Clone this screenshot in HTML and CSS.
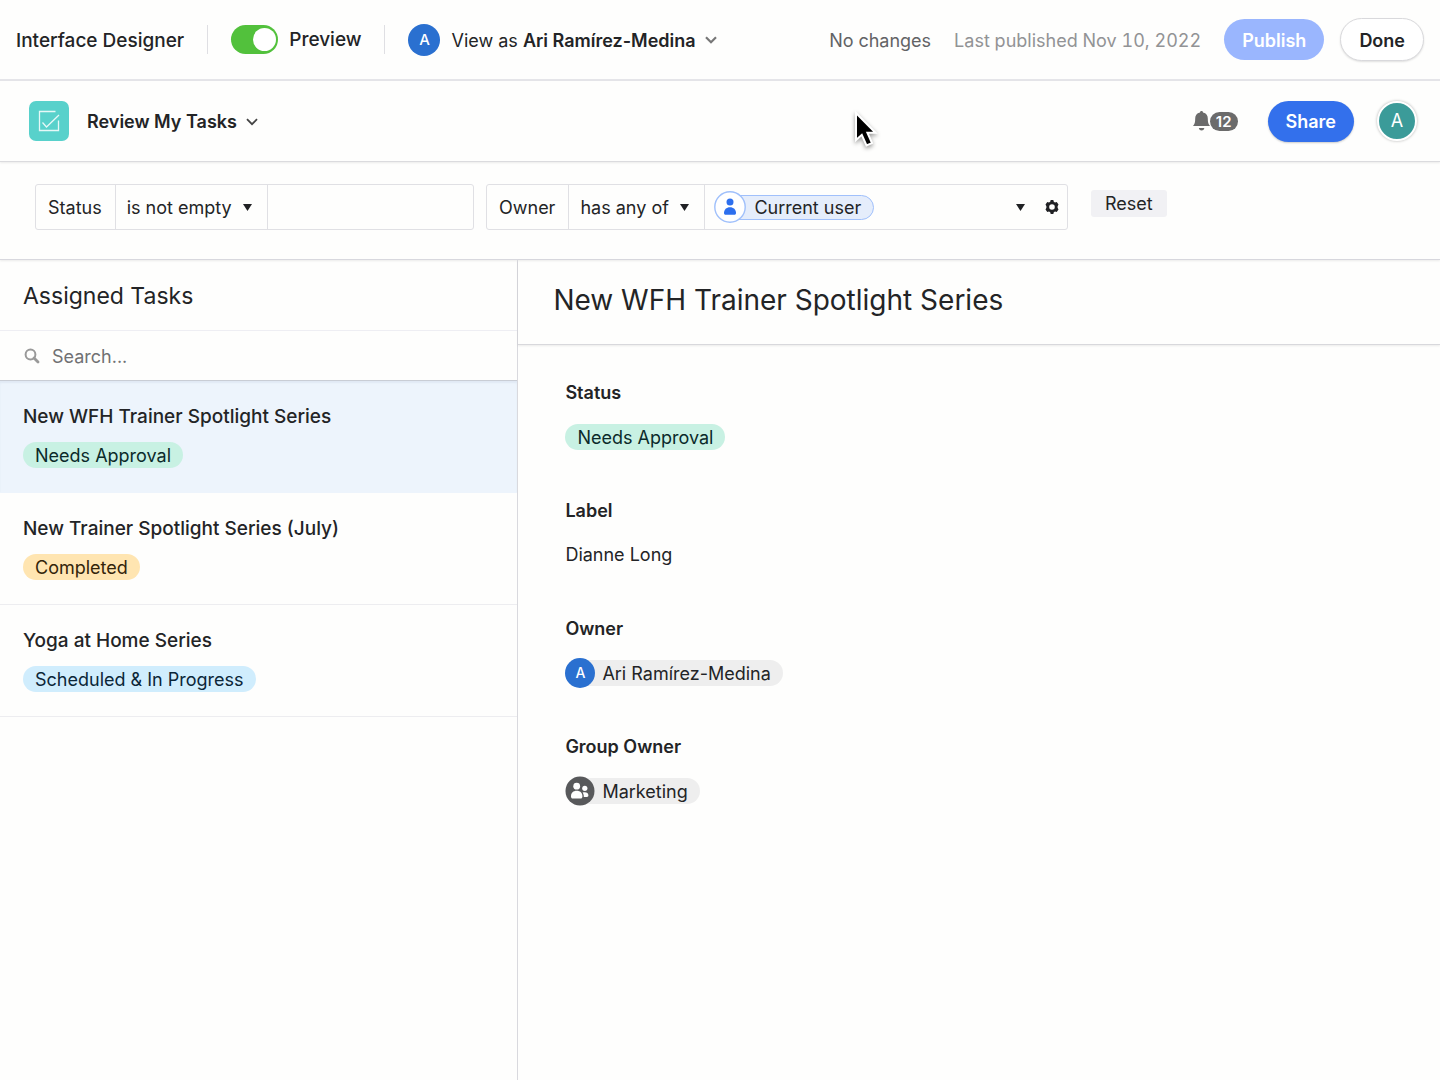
FILE: index.html
```html
<!DOCTYPE html>
<html lang="en">
<head>
<meta charset="utf-8">
<meta name="viewport" content="width=device-width, initial-scale=1">
<title>Review My Tasks</title>
<link rel="stylesheet" href="styles.css">
</head>
<body>
<div class="app">
  <header class="designer-bar">
    <span class="designer-title">Interface Designer</span>
    <span class="divider"></span>
    <label class="preview"><input class="toggle" type="checkbox" role="switch" checked>Preview</label>
    <span class="divider"></span>
    <button class="view-as" type="button" aria-haspopup="listbox">
      <span class="avatar avatar-md">A</span>
      <span class="view-as-text">View as <strong>Ari Ramírez-Medina</strong></span>
      <svg class="chevron" width="12" height="8" viewBox="0 0 12 8" aria-hidden="true"><path d="M1 1.2l5 5 5-5" fill="none" stroke="#777" stroke-width="2.2"/></svg>
    </button>
    <div class="designer-actions">
      <span class="changes">No changes</span>
      <span class="published">Last published Nov 10, 2022</span>
      <button class="pill-button publish" type="button">Publish</button>
      <button class="pill-button done" type="button">Done</button>
    </div>
  </header>

  <header class="interface-bar">
    <svg class="logo" width="40" height="40" viewBox="0 0 40 40" aria-hidden="true"><rect width="40" height="40" rx="7" fill="#58d1cb"/><path d="M26.5 10.500H10.500v19h19V19.500M13.500 21.500l4 4.500L30 14" fill="none" stroke="#fff" stroke-opacity=".85" stroke-width="1.300"/></svg>
    <button class="interface-name" type="button" aria-haspopup="menu">Review My Tasks
      <svg class="chevron" width="12" height="8" viewBox="0 0 12 8" aria-hidden="true"><path d="M1 1.200l5 5 5-5" fill="none" stroke="#444" stroke-width="1.800"/></svg>
    </button>
    <div class="interface-actions">
      <button class="notifications" type="button" aria-label="12 notifications">
        <svg width="17" height="20" viewBox="0 0 17 20" aria-hidden="true"><path d="M8.500 0c1 0 1.500.6 1.500 1.500 3.500.8 4.800 3 4.800 6 0 4 .5 5.500 2.200 7.500H0c1.700-2 2.200-3.500 2.200-7.500 0-3 1.300-5.200 4.800-6C7 .6 7.500 0 8.500 0zM5.800 17h5.600c-.4 1.700-1.400 2.500-2.800 2.500S6.200 18.700 5.800 17z" fill="#6b6b6b"/></svg>
        <span class="count">12</span>
      </button>
      <button class="pill-button share" type="button">Share</button>
      <button class="avatar account" type="button" aria-label="Account">A</button>
    </div>
  </header>

  <section class="filters" aria-label="Filters">
    <div class="filter filter-status">
      <label class="filter-field" for="status-op">Status</label>
      <div class="filter-op">
        <select id="status-op"><option>is not empty</option></select>
        <svg class="caret" width="9" height="7" viewBox="0 0 9 7" aria-hidden="true"><path d="M0 0h9L4.500 7z"/></svg>
      </div>
      <input class="filter-value" type="text" aria-label="Status value">
    </div>
    <div class="filter filter-owner">
      <label class="filter-field" for="owner-op">Owner</label>
      <div class="filter-op">
        <select id="owner-op"><option>has any of</option></select>
        <svg class="caret" width="9" height="7" viewBox="0 0 9 7" aria-hidden="true"><path d="M0 0h9L4.500 7z"/></svg>
      </div>
      <button class="filter-users" type="button" aria-haspopup="listbox">
        <span class="user-token">
          <svg class="user-token-icon" width="32" height="32" viewBox="0 0 32 32" aria-hidden="true"><circle cx="16" cy="16" r="15.200" fill="#fff" stroke="#a0c0fb" stroke-width="1.400"/><circle cx="16" cy="11" r="3.500" fill="#2d6fee"/><path d="M10 22c0-3.500 2.400-5.800 6-5.800s6 2.300 6 5.800c0 1-.6 1.800-1.700 1.800h-8.600C10.600 23.800 10 23 10 22z" fill="#2d6fee"/></svg>
          <span class="user-token-text">Current user</span>
        </span>
        <svg class="caret" width="9" height="7" viewBox="0 0 9 7" aria-hidden="true"><path d="M0 0h9L4.500 7z"/></svg>
      </button>
      <button class="filter-settings" type="button" aria-label="Filter settings">
        <svg width="14" height="14" viewBox="0 0 14 14" aria-hidden="true"><path fill-rule="evenodd" d="M5.700 0h2.600l.5 1.700 1.200.7 1.700-.5L13.500 4.500l-.9 1.700v1.600l.9 1.700-1.800 2.600-1.700-.5-1.200.7L8.300 14H5.700l-.5-1.700-1.200-.7-1.700.5L.5 9.500l.9-1.700V6.200L.5 4.500l1.800-2.600 1.700.5 1.200-.7zM7 4.200a2.800 2.800 0 1 0 0 5.600 2.800 2.800 0 0 0 0-5.600z" fill="#202124"/></svg>
      </button>
    </div>
    <button class="reset" type="button">Reset</button>
  </section>

  <main class="content">
    <aside class="tasks">
      <h2 class="tasks-title">Assigned Tasks</h2>
      <label class="search">
        <svg width="16" height="16" viewBox="0 0 16 16" aria-hidden="true"><circle cx="6.500" cy="6.500" r="4.900" fill="none" stroke="#999" stroke-width="2"/><path d="M10 10l4 4" stroke="#999" stroke-width="2.800" stroke-linecap="round"/></svg>
        <input type="search" placeholder="Search..." aria-label="Search tasks">
      </label>
      <ul class="task-list">
        <li><a class="task selected" href="#new-wfh" aria-current="true"><span class="task-name">New WFH Trainer Spotlight Series</span><span class="tag tag-green">Needs Approval</span></a></li>
        <li><a class="task" href="#july"><span class="task-name">New Trainer Spotlight Series (July)</span><span class="tag tag-yellow">Completed</span></a></li>
        <li><a class="task" href="#yoga"><span class="task-name">Yoga at Home Series</span><span class="tag tag-blue">Scheduled &amp; In Progress</span></a></li>
      </ul>
    </aside>
    <article class="detail">
      <h1 class="detail-title">New WFH Trainer Spotlight Series</h1>
      <dl class="fields">
        <div class="field"><dt>Status</dt><dd><span class="tag tag-green">Needs Approval</span></dd></div>
        <div class="field"><dt>Label</dt><dd>Dianne Long</dd></div>
        <div class="field"><dt>Owner</dt><dd><span class="person"><span class="avatar avatar-sm">A</span><span class="person-name">Ari Ramírez-Medina</span></span></dd></div>
        <div class="field"><dt>Group Owner</dt><dd><span class="person">
          <svg class="group-icon" width="30" height="30" viewBox="0 0 30 30" aria-hidden="true"><circle cx="15" cy="15" r="14.500" fill="#58595b"/><g fill="#fff"><circle cx="11.700" cy="10.200" r="3.400"/><path d="M6 20.200c0-3.300 2.200-5.400 5.700-5.400s5.700 2.100 5.700 5.400c0 1.400-.6 2.300-1.900 2.300H7.900C6.600 22.500 6 21.600 6 20.200z"/><circle cx="19.800" cy="12.300" r="2.600"/><path d="M17.600 16.400c3.300-.8 5.800.2 5.800 2.800 0 1-.5 1.700-1.500 1.700h-3.100c.1-1.700-.3-3.100-1.200-4.500z"/></g></svg>
          <span class="person-name">Marketing</span></span></dd></div>
      </dl>
    </article>
  </main>
</div>
<svg class="pointer" width="28" height="40" viewBox="0 0 28 40" aria-hidden="true"><path d="M3 3v27l5.800-5.200 4.700 10.700 5.500-2.400-4.600-10.400h8.100z" fill="#000" stroke="#fff" stroke-width="2"/></svg>
</body>
</html>
```
FILE: styles.css
```css
* { box-sizing: border-box; }

body {
  margin: 0;
  background: #fefefd;
  color: #232426;
  font: 400 18px/24px Inter, "Liberation Sans", sans-serif;
}

button, input, select {
  margin: 0;
  padding: 0;
  border: 0;
  background: none;
  color: inherit;
  font: inherit;
}

button { cursor: pointer; }

.app {
  display: flex;
  flex-direction: column;
  min-height: 100vh;
}

/* Designer toolbar */
.designer-bar,
.interface-bar {
  display: flex;
  align-items: center;
  white-space: nowrap;
}

.designer-bar {
  height: 81px;
  padding: 0 16px 0 16px;
  gap: 23px;
  border-bottom: 2px solid #e5e5e9;
}

.designer-title,
.preview {
  font-size: 19px;
  font-weight: 500;
}

.designer-title { padding-top: 2px; }

.divider {
  width: 1px;
  height: 29px;
  background: #dfdfe3;
}

.preview {
  display: flex;
  align-items: center;
  gap: 11px;
}

.toggle {
  display: flex;
  justify-content: flex-end;
  width: 47px;
  height: 29px;
  padding: 3px 2px;
  border-radius: 15px;
  appearance: none;
  background: #52c13c;
}

.toggle::before {
  content: "";
  width: 23px;
  height: 23px;
  border-radius: 50%;
  background: #fff;
}

.view-as {
  display: flex;
  align-items: center;
}

.view-as-text {
  margin: 0 9px 0 11px;
  padding-top: 2px;
}

.view-as strong { font-weight: 600; }

.avatar {
  display: grid;
  place-items: center;
  flex: none;
  border-radius: 50%;
  background: #2a70d0;
  color: #fff;
}

.avatar-md {
  width: 32px;
  height: 32px;
  font-size: 15px;
  font-weight: 500;
}

.designer-actions,
.interface-actions {
  display: flex;
  align-items: center;
  margin-left: auto;
}

.designer-actions { gap: 23px; }

.changes,
.published {
  padding-top: 2px;
  font-variant-numeric: tabular-nums;
}

.changes { color: #626365; }
.published { color: #929395; }

.pill-button {
  height: 41px;
  padding: 2px 18px 0;
  border-radius: 21px;
  font-weight: 600;
}

.publish {
  background: #9ab6fe;
  color: #fff;
}

.done {
  height: 43px;
  margin-left: -7px;
  border: 1px solid #d9d9dc;
  border-radius: 22px;
  background: #fff;
  box-shadow: 0 1px 2px rgba(0, 0, 0, .12);
}

/* Interface header */
.interface-bar {
  height: 81px;
  padding: 0 23px 0 29px;
  border-bottom: 1px solid #dcdcdf;
  box-shadow: 0 1px 2px rgba(0, 0, 0, .08);
}

.interface-name {
  display: flex;
  align-items: center;
  gap: 9px;
  margin-left: 18px;
  padding-top: 1px;
  font-weight: 600;
}

.notifications {
  display: flex;
  align-items: center;
}

.count {
  padding: 0 6px;
  border-radius: 10px;
  background: #6b6b6b;
  color: #fff;
  font-size: 15px;
  font-weight: 600;
  line-height: 19px;
}

.share {
  margin: 0 23px 0 30px;
  background: #3370ec;
  box-shadow: 0 1px 2px rgba(0, 0, 0, .2);
  color: #fff;
}

.account {
  width: 40px;
  height: 40px;
  border: 2px solid #fff;
  background: #3b9b99;
  box-shadow: 0 0 3px rgba(0, 0, 0, .3);
}

/* Filters */
.filters {
  display: flex;
  align-items: flex-start;
  height: 98px;
  padding: 22px 35px;
  gap: 12px;
  border-bottom: 1px solid #d8d8de;
  box-shadow: 0 1px 2px rgba(0, 0, 0, .08);
  white-space: nowrap;
}

.filter {
  display: flex;
  height: 46px;
  border: 1px solid #e0e0e4;
  border-radius: 3px;
}

.filter-status { width: 439px; }
.filter-owner { width: 582px; }

.filter-field { padding: 11px 13px 11px 12px; }

.filter-op {
  display: flex;
  align-items: center;
  border: 1px solid #e0e0e4;
  border-width: 0 1px;
}

.filter-op select {
  height: 44px;
  margin-right: -9px;
  padding: 2px 29px 0 11px;
  appearance: none;
}

.filter-op .caret {
  margin: 0 15px 0 -9px;
  pointer-events: none;
}

.caret {
  flex: none;
  fill: #202124;
}

.filter-value {
  flex: 1;
  min-width: 0;
}

.filter-users {
  display: flex;
  flex: 1;
  align-items: center;
  justify-content: space-between;
  padding: 0 10px 0 9px;
}

.user-token {
  display: flex;
  align-items: center;
}

.user-token-icon { z-index: 1; }

.user-token-text {
  margin-left: -8px;
  padding: 1px 12px 0 15px;
  border: 1px solid #a0c0fb;
  border-radius: 0 13px 13px 0;
  background: #e5edfb;
  line-height: 22px;
}

.filter-settings {
  display: flex;
  align-items: center;
  padding: 0 8px 0 10px;
}

.reset {
  margin: 6px 0 0 11px;
  padding: 1px 14px 0;
  border-radius: 3px;
  background: #f1f1f4;
  line-height: 26px;
}

/* Record list */
.content {
  display: grid;
  grid-template-columns: 36% 1fr;
  flex: 1;
}

.tasks { border-right: 1px solid #d9d9de; }

.tasks-title {
  margin: 0;
  padding: 20px 23px 18px;
  border-bottom: 1px solid #eeeef3;
  font-size: 23px;
  font-weight: 400;
  line-height: 32px;
}

.search {
  display: flex;
  align-items: center;
  height: 50px;
  padding: 0 24px;
  gap: 12px;
  border-bottom: 1px solid #c9cdd5;
}

.search input {
  flex: 1;
  min-width: 0;
  padding-top: 2px;
  outline: 0;
}

.search input::placeholder { color: #707173; }

.task-list {
  margin: 0;
  padding: 0;
  list-style: none;
}

.task {
  display: flex;
  flex-direction: column;
  align-items: flex-start;
  padding: 24px 23px;
  gap: 13px;
  border-bottom: 1px solid #ededf0;
  color: inherit;
  text-decoration: none;
}

.task-name {
  font-size: 19px;
  font-weight: 500;
}

.selected {
  border-color: #edf4fc;
  background: #edf4fc;
  box-shadow: inset 0 2px 2px rgba(40, 60, 120, .06);
}

.tag {
  display: inline-block;
  padding: 2px 12px 0;
  border-radius: 13px;
  line-height: 24px;
}

.tag-green { background: #c8f1e3; color: #0b2a2a; }
.tag-yellow { background: #ffe5b1; color: #33240a; }
.tag-blue { background: #d0edfd; color: #0b2638; }

/* Record detail */
.detail-title {
  margin: 0;
  padding: 20px 35px 24px;
  border-bottom: 1px solid #d8d8dc;
  box-shadow: 0 1px 2px rgba(0, 0, 0, .08);
  font-size: 28px;
  font-weight: 400;
  line-height: 40px;
}

.fields {
  display: flex;
  flex-direction: column;
  margin: 0;
  padding: 36px 47px;
  gap: 46px;
}

.field {
  display: flex;
  flex-direction: column;
  gap: 16px;
}

.field dt { font-weight: 600; }

.field dd {
  display: flex;
  align-items: center;
  height: 32px;
  margin: 0;
}

.person {
  display: flex;
  align-items: center;
}

.avatar-sm {
  width: 30px;
  height: 30px;
  font-size: 14px;
  font-weight: 500;
}

.avatar-sm,
.group-icon { z-index: 1; }

.person-name {
  margin-left: -8px;
  padding: 2px 12px 0 15px;
  border-radius: 0 13px 13px 0;
  background: #eeeeee;
  line-height: 24px;
}

/* Mouse pointer over the page */
.pointer {
  position: absolute;
  top: 110px;
  left: 853px;
  filter: drop-shadow(0 2px 2px rgba(0, 0, 0, .4));
}
```
